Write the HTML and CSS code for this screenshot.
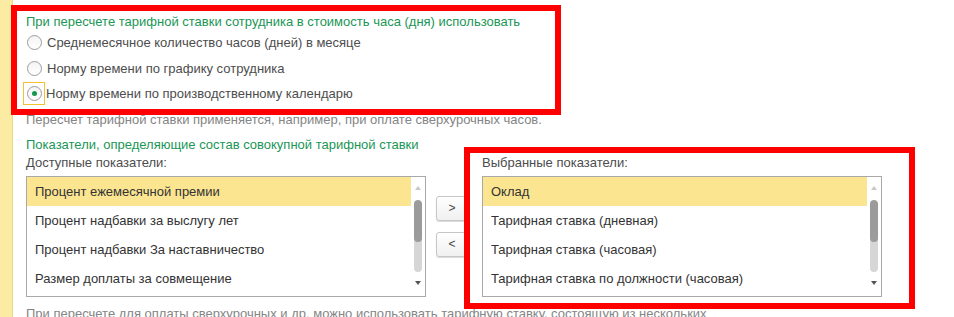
FILE: index.html
```html
<!DOCTYPE html>
<html lang="ru">

<head>
    <meta charset="UTF-8">
    <title>Совокупная тарифная ставка</title>
    <link rel="stylesheet" href="styles.css">
</head>

<body>
    <div class="page">
        <div class="strip"></div>

        <div class="form">
            <!-- способ пересчета -->
            <div class="group-title">При пересчете тарифной ставки сотрудника в стоимость часа (дня) использовать</div>
            <div class="radio-row"><span class="radio"></span>Среднемесячное количество часов (дней) в месяце</div>
            <div class="radio-row"><span class="radio"></span>Норму времени по графику сотрудника</div>
            <div class="radio-row"><span class="focus"><span class="radio checked"></span></span>Норму времени по производственному календарю</div>
            <div class="note">Пересчет тарифной ставки применяется, например, при оплате сверхурочных часов.</div>

            <!-- показатели -->
            <div class="group-title second">Показатели, определяющие состав совокупной тарифной ставки</div>
            <div class="columns">
                <div class="column">
                    <div class="label">Доступные показатели:</div>
                    <div class="listbox">
                        <ul class="items">
                            <li class="selected">Процент ежемесячной премии</li>
                            <li>Процент надбавки за выслугу лет</li>
                            <li>Процент надбавки За наставничество</li>
                            <li>Размер доплаты за совмещение</li>
                        </ul>
                        <div class="scroll">
                            <span class="arrow up"></span>
                            <span class="track"><span class="thumb"></span></span>
                            <span class="arrow down"></span>
                        </div>
                    </div>
                </div>

                <div class="buttons">
                    <button class="move">&gt;</button>
                    <button class="move">&lt;</button>
                </div>

                <div class="column">
                    <div class="label">Выбранные показатели:</div>
                    <div class="listbox">
                        <ul class="items">
                            <li class="selected">Оклад</li>
                            <li>Тарифная ставка (дневная)</li>
                            <li>Тарифная ставка (часовая)</li>
                            <li>Тарифная ставка по должности (часовая)</li>
                        </ul>
                        <div class="scroll">
                            <span class="arrow up"></span>
                            <span class="track"><span class="thumb"></span></span>
                            <span class="arrow down"></span>
                        </div>
                    </div>
                </div>
            </div>
            <div class="note bottom">При пересчете для оплаты сверхурочных и др. можно использовать тарифную ставку, состоящую из нескольких показателей.</div>
        </div>
    </div>

    <!-- красные рамки поверх формы -->
    <div class="mark mark-top"></div>
    <div class="mark mark-right"></div>
</body>

</html>
```

FILE: styles.css
```css
body {
    margin: 0;
    background-color: #ffffff;
    font-family: "Liberation Sans", Arial, sans-serif;
    font-size: 13px;
    color: #4d4d4d;
    overflow: hidden;
}

.page {
    display: flex;
    height: 317px;
}

.strip {
    width: 12px;
    flex-shrink: 0;
    background-color: #fbeba3;
    border-right: 1px solid #ead889;
}

.form {
    padding-left: 13px;
    padding-top: 14px;
    white-space: nowrap;
}

.group-title {
    color: #1a9656;
    line-height: 16px;
}

.group-title.second {
    margin-top: 9px;
}

.radio-row {
    display: flex;
    align-items: center;
    height: 25.5px;
    margin-left: 1px;
}

.radio-row:first-of-type {
    margin-top: 1px;
}

.radio {
    width: 15px;
    height: 15px;
    border: 1px solid #9c9c9c;
    border-radius: 50%;
    background: linear-gradient(#f4f4f4, #ffffff);
    margin-right: 5px;
    display: flex;
    align-items: center;
    justify-content: center;
    box-sizing: border-box;
}

.radio.checked::after {
    content: "";
    width: 5px;
    height: 5px;
    border-radius: 50%;
    background-color: #13994f;
}

.focus {
    display: flex;
    align-items: center;
    justify-content: center;
    width: 20px;
    height: 21px;
    border: 1px solid #f1c232;
    margin-left: -4px;
    margin-right: 1px;
}

.focus .radio {
    margin-right: 0;
}

.note {
    color: #858585;
    line-height: 16px;
    margin-top: 5px;
}

.note.bottom {
    margin-top: 9px;
    white-space: normal;
    width: 700px;
}

.label {
    line-height: 16px;
    margin-top: 2px;
    margin-bottom: 5px;
}

.columns {
    display: flex;
    align-items: flex-start;
}

.column {
    width: 400px;
}

.listbox {
    display: flex;
    height: 121px;
    border: 1px solid #a9a9a9;
    box-sizing: border-box;
}

.items {
    list-style-type: none;
    margin: 0;
    padding: 0;
    flex: 1;
    color: #333333;
}

.items li {
    height: 29px;
    line-height: 29px;
    padding-left: 8px;
}

.items li.selected {
    background-color: #fbe591;
}

.scroll {
    width: 14px;
    display: flex;
    flex-direction: column;
    align-items: center;
    padding-top: 9px;
}

.arrow {
    width: 0;
    height: 0;
    border-left: 3px solid transparent;
    border-right: 3px solid transparent;
}

.arrow.up {
    border-bottom: 4px solid #c8c8c8;
}

.arrow.down {
    border-top: 4px solid #555555;
    margin-top: 9px;
}

.track {
    margin-top: 10px;
    width: 8px;
    height: 72px;
    border-radius: 4px;
    background-color: #d6d6d6;
    overflow: hidden;
}

.thumb {
    display: block;
    height: 42px;
    border-radius: 4px;
    background-color: #9b9b9b;
}

.buttons {
    display: flex;
    flex-direction: column;
    gap: 11px;
    margin: 43px 14px 0 10px;
}

.move {
    width: 32px;
    height: 25px;
    padding: 0;
    font-family: "Liberation Sans", Arial, sans-serif;
    font-size: 12px;
    color: #444444;
    border: 1px solid #c6c6c6;
    border-radius: 3px;
    background: linear-gradient(#ffffff, #f0f0f0);
    box-shadow: 0 1px 1px rgba(0, 0, 0, 0.15);
}

.mark {
    position: absolute;
    border: 6px solid #ff0000;
    box-sizing: border-box;
}

.mark-top {
    left: 11px;
    top: 5px;
    width: 550px;
    height: 110px;
}

.mark-right {
    left: 464px;
    top: 147px;
    width: 451px;
    height: 162px;
}
```
